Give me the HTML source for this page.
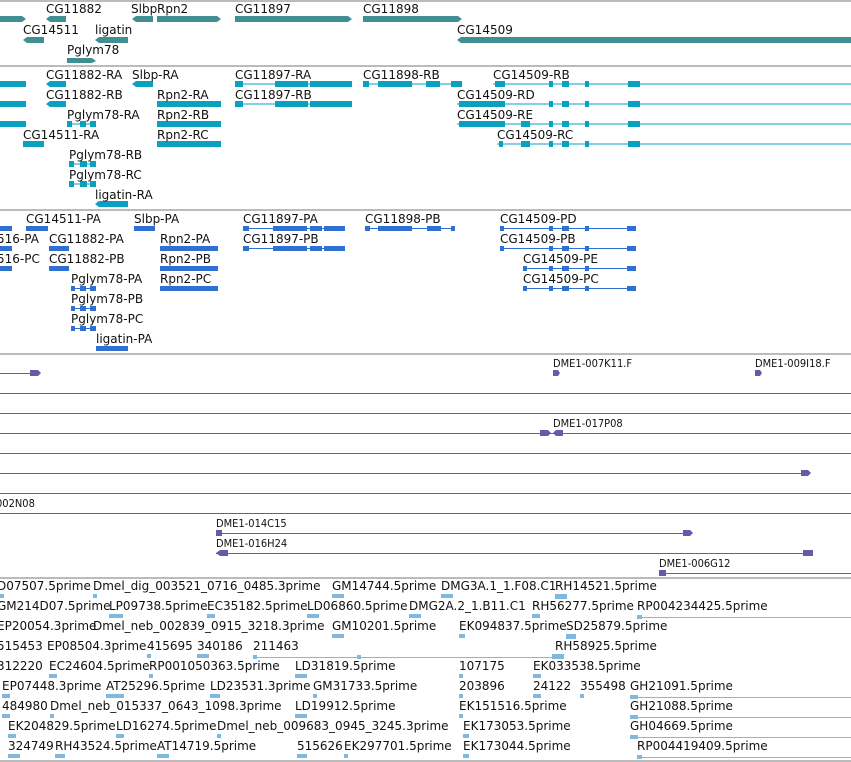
<!DOCTYPE html>
<html><head><meta charset="utf-8"><style>
html,body{margin:0;padding:0;background:#fff;width:851px;height:762px;overflow:hidden}
svg{display:block}
text{font-family:"DejaVu Sans","Liberation Sans",sans-serif;font-size:12px;fill:#111}
.c text{font-family:"DejaVu Sans Condensed","DejaVu Sans",sans-serif;font-size:11px}
</style></head><body>
<svg width="851" height="762" xmlns="http://www.w3.org/2000/svg">
<g stroke="#bbb" stroke-width="2">
<line x1="0" y1="1" x2="851" y2="1"/><line x1="0" y1="66" x2="851" y2="66"/>
<line x1="0" y1="210" x2="851" y2="210"/><line x1="0" y1="354" x2="851" y2="354"/>
<line x1="0" y1="578" x2="851" y2="578"/><line x1="0" y1="761" x2="851" y2="761"/>
</g>
<!-- Track 1 genes -->
<g fill="#418f93">
<polygon points="0,16 22,16 26,19 22,22 0,22"/>
<polygon points="50,16 66,16 66,22 50,22 46,19"/>
<polygon points="136,16 153,16 153,22 136,22 132,19"/>
<polygon points="157,16 217,16 221,19 217,22 157,22"/>
<polygon points="235,16 348,16 352,19 348,22 235,22"/>
<polygon points="363,16 458,16 462,19 458,22 363,22"/>
<polygon points="461,37 851,37 851,43 461,43 457,40"/>
<polygon points="27,37 44,37 44,43 27,43 23,40"/>
<polygon points="99,37 128,37 128,43 99,43 95,40"/>
<polygon points="67,58 92,58 96,61 92,63 67,63"/>
</g>
<text x="46" y="13">CG11882</text><text x="131" y="13">Slbp</text><text x="157" y="13">Rpn2</text>
<text x="235" y="13">CG11897</text><text x="363" y="13">CG11898</text>
<text x="23" y="34">CG14511</text><text x="95" y="34">ligatin</text><text x="457" y="34">CG14509</text>
<text x="67" y="54">Pglym78</text>
<!-- Track 2 transcripts -->
<g fill="#0aa0c0" stroke="none">
<rect x="0" y="83.5" width="26" height="1"/><rect x="0" y="81" width="26" height="6"/>
<rect x="0" y="101" width="26" height="6"/><rect x="0" y="121" width="26" height="6"/>
<polygon points="50,81 66,81 66,87 50,87 46,84"/><polygon points="50,101 66,101 66,107 50,107 46,104"/>
<polygon points="136,81 153,81 153,87 136,87 132,84"/>
<rect x="235" y="83.5" width="117" height="1"/><rect x="235" y="81" width="8" height="6"/><rect x="275" y="81" width="33" height="6"/><rect x="310" y="81" width="12" height="6"/><rect x="322" y="81" width="30" height="6"/>
<rect x="235" y="103.5" width="117" height="1"/><rect x="235" y="101" width="8" height="6"/><rect x="275" y="101" width="33" height="6"/><rect x="310" y="101" width="12" height="6"/><rect x="322" y="101" width="30" height="6"/>
<rect x="363" y="83.5" width="99" height="1"/><rect x="363" y="81" width="6" height="6"/><rect x="378" y="81" width="34" height="6"/><rect x="426" y="81" width="14" height="6"/><rect x="451" y="81" width="11" height="6"/>
<rect x="157" y="101" width="64" height="6"/><rect x="157" y="121" width="64" height="6"/><rect x="157" y="141" width="64" height="6"/>
<rect x="67" y="123.5" width="29" height="1"/><rect x="67" y="121" width="5" height="6"/><rect x="80" y="121" width="6" height="6"/><rect x="90" y="121" width="6" height="6"/>
<rect x="23" y="141" width="21" height="6"/>
<rect x="69" y="163.5" width="27" height="1"/><rect x="69" y="161" width="5" height="6"/><rect x="80" y="161" width="7" height="6"/><rect x="90" y="161" width="6" height="6"/>
<rect x="69" y="183.5" width="27" height="1"/><rect x="69" y="181" width="5" height="6"/><rect x="80" y="181" width="7" height="6"/><rect x="90" y="181" width="6" height="6"/>
<polygon points="99,201 128,201 128,207 99,207 95,204"/>
<rect x="493" y="83.5" width="358" height="1"/><rect x="495" y="81" width="10" height="6"/><rect x="628" y="81" width="12" height="6"/>
<rect x="457" y="103.5" width="394" height="1"/><rect x="459" y="101" width="46" height="6"/><rect x="628" y="101" width="12" height="6"/>
<rect x="457" y="123.5" width="394" height="1"/><rect x="459" y="121" width="46" height="6"/><rect x="521" y="121" width="9" height="6"/><rect x="628" y="121" width="12" height="6"/>
<rect x="497" y="143.5" width="354" height="1"/><rect x="499" y="141" width="4" height="6"/><rect x="521" y="141" width="9" height="6"/><rect x="628" y="141" width="12" height="6"/>
<rect x="549" y="81" width="4" height="6"/><rect x="562" y="81" width="7" height="6"/><rect x="585" y="81" width="4" height="6"/>
<rect x="549" y="101" width="4" height="6"/><rect x="562" y="101" width="7" height="6"/><rect x="585" y="101" width="4" height="6"/>
<rect x="549" y="121" width="4" height="6"/><rect x="562" y="121" width="7" height="6"/><rect x="585" y="121" width="4" height="6"/>
<rect x="549" y="141" width="4" height="6"/><rect x="562" y="141" width="7" height="6"/><rect x="585" y="141" width="4" height="6"/>
</g>
<text x="46" y="79">CG11882-RA</text><text x="132" y="79">Slbp-RA</text><text x="235" y="79">CG11897-RA</text><text x="363" y="79">CG11898-RB</text><text x="493" y="79">CG14509-RB</text>
<text x="46" y="99">CG11882-RB</text><text x="157" y="99">Rpn2-RA</text><text x="235" y="99">CG11897-RB</text><text x="457" y="99">CG14509-RD</text>
<text x="67" y="119">Pglym78-RA</text><text x="157" y="119">Rpn2-RB</text><text x="457" y="119">CG14509-RE</text>
<text x="23" y="139">CG14511-RA</text><text x="157" y="139">Rpn2-RC</text><text x="497" y="139">CG14509-RC</text>
<text x="69" y="159">Pglym78-RB</text><text x="69" y="179">Pglym78-RC</text><text x="95" y="199">ligatin-RA</text>
<!-- Track 3 proteins -->
<g fill="#3070d0">
<rect x="0" y="226" width="12" height="5"/><rect x="26" y="226" width="22" height="5"/><rect x="134" y="226" width="21" height="5"/>
<rect x="243" y="228" width="102" height="1"/><rect x="243" y="226" width="6" height="5"/><rect x="273" y="226" width="34" height="5"/><rect x="310" y="226" width="12" height="5"/><rect x="324" y="226" width="21" height="5"/>
<rect x="365" y="228" width="90" height="1"/><rect x="365" y="226" width="5" height="5"/><rect x="378" y="226" width="34" height="5"/><rect x="427" y="226" width="14" height="5"/><rect x="451" y="226" width="4" height="5"/>
<rect x="0" y="246" width="12" height="5"/><rect x="49" y="246" width="20" height="5"/><rect x="160" y="246" width="58" height="5"/>
<rect x="243" y="248" width="102" height="1"/><rect x="243" y="246" width="6" height="5"/><rect x="273" y="246" width="34" height="5"/><rect x="310" y="246" width="12" height="5"/><rect x="324" y="246" width="21" height="5"/>
<rect x="0" y="266" width="12" height="5"/><rect x="49" y="266" width="20" height="5"/><rect x="160" y="266" width="58" height="5"/>
<rect x="71" y="288" width="25" height="1"/><rect x="71" y="286" width="4" height="5"/><rect x="80" y="286" width="6" height="5"/><rect x="90" y="286" width="6" height="5"/><rect x="160" y="286" width="58" height="5"/>
<rect x="71" y="308" width="25" height="1"/><rect x="71" y="306" width="4" height="5"/><rect x="80" y="306" width="6" height="5"/><rect x="90" y="306" width="6" height="5"/>
<rect x="71" y="328" width="25" height="1"/><rect x="71" y="326" width="4" height="5"/><rect x="80" y="326" width="6" height="5"/><rect x="90" y="326" width="6" height="5"/>
<rect x="96" y="346" width="32" height="5"/>
<rect x="500" y="228" width="136" height="1"/><rect x="500" y="248" width="136" height="1"/><rect x="523" y="268" width="113" height="1"/><rect x="523" y="288" width="113" height="1"/>
<rect x="500" y="226" width="4" height="5"/><rect x="500" y="246" width="4" height="5"/><rect x="523" y="266" width="4" height="5"/><rect x="523" y="286" width="4" height="5"/>
<rect x="549" y="226" width="4" height="5"/><rect x="562" y="226" width="7" height="5"/><rect x="585" y="226" width="4" height="5"/><rect x="627" y="226" width="9" height="5"/>
<rect x="549" y="246" width="4" height="5"/><rect x="562" y="246" width="7" height="5"/><rect x="585" y="246" width="4" height="5"/><rect x="627" y="246" width="9" height="5"/>
<rect x="549" y="266" width="4" height="5"/><rect x="562" y="266" width="7" height="5"/><rect x="585" y="266" width="4" height="5"/><rect x="627" y="266" width="9" height="5"/>
<rect x="549" y="286" width="4" height="5"/><rect x="562" y="286" width="7" height="5"/><rect x="585" y="286" width="4" height="5"/><rect x="627" y="286" width="9" height="5"/>
</g>
<text x="26" y="223">CG14511-PA</text><text x="134" y="223">Slbp-PA</text><text x="243" y="223">CG11897-PA</text><text x="365" y="223">CG11898-PB</text><text x="500" y="223">CG14509-PD</text>
<text x="-3" y="243">516-PA</text><text x="49" y="243">CG11882-PA</text><text x="160" y="243">Rpn2-PA</text><text x="243" y="243">CG11897-PB</text><text x="500" y="243">CG14509-PB</text>
<text x="-3" y="263">516-PC</text><text x="49" y="263">CG11882-PB</text><text x="160" y="263">Rpn2-PB</text><text x="523" y="263">CG14509-PE</text>
<text x="71" y="283">Pglym78-PA</text><text x="160" y="283">Rpn2-PC</text><text x="523" y="283">CG14509-PC</text>
<text x="71" y="303">Pglym78-PB</text><text x="71" y="323">Pglym78-PC</text><text x="96" y="343">ligatin-PA</text>
<!-- Track 4 clones -->
<g fill="#6a58a8">
<rect x="0" y="373" width="34" height="1"/><polygon points="30,370 38,370 41,373 38,376 30,376"/>
<polygon points="553,370 558,370 560,373 558,376 553,376"/><polygon points="755,370 760,370 762,373 760,376 755,376"/>
<rect x="0" y="393" width="851" height="1"/><rect x="0" y="413" width="851" height="1"/>
<rect x="0" y="433" width="851" height="1"/><polygon points="540,430 548,430 551,433 548,436 540,436"/><polygon points="556,430 563,430 563,436 556,436 553,433"/>
<rect x="0" y="453" width="851" height="1"/>
<rect x="0" y="473" width="808" height="1"/><polygon points="801,470 808,470 811,473 808,476 801,476"/>
<rect x="0" y="493" width="851" height="1"/><rect x="0" y="513" width="851" height="1"/>
<rect x="216" y="533" width="474" height="1"/><rect x="216" y="530" width="6" height="6"/><polygon points="683,530 690,530 693,533 690,536 683,536"/>
<rect x="216" y="553" width="597" height="1"/><polygon points="220,550 228,550 228,556 220,556 216,553"/><rect x="803" y="550" width="10" height="6"/>
<rect x="659" y="573" width="192" height="1"/><rect x="659" y="570" width="7" height="6"/>
</g>
<g class="c">
<text x="553" y="367">DME1-007K11.F</text><text x="755" y="367">DME1-009I18.F</text>
<text x="553" y="427">DME1-017P08</text><text x="-4" y="507">002N08</text>
<text x="216" y="527">DME1-014C15</text><text x="216" y="547">DME1-016H24</text><text x="659" y="567">DME1-006G12</text>
</g>
<!-- Track 5 ESTs -->
<g fill="#80b8e0">
<rect x="0" y="594" width="4" height="4"/><rect x="93" y="594" width="4" height="4"/><rect x="332" y="594" width="12" height="4"/><rect x="441" y="594" width="12" height="4"/><rect x="555" y="594" width="12" height="5"/>
<rect x="109" y="614" width="14" height="4"/><rect x="207" y="614" width="8" height="4"/><rect x="307" y="614" width="12" height="4"/><rect x="409" y="614" width="12" height="4"/><rect x="532" y="614" width="8" height="4"/>
<rect x="637" y="617" width="214" height="1"/><rect x="637" y="615" width="5" height="4"/>
<rect x="332" y="634" width="12" height="4"/><rect x="459" y="634" width="6" height="4"/><rect x="566" y="634" width="10" height="5"/>
<rect x="147" y="654" width="4" height="4"/><rect x="197" y="654" width="12" height="4"/><rect x="253" y="657" width="302" height="1"/><rect x="253" y="655" width="4" height="4"/><rect x="357" y="655" width="4" height="4"/><rect x="552" y="654" width="12" height="5"/>
<rect x="49" y="674" width="8" height="4"/><rect x="149" y="674" width="4" height="4"/><rect x="295" y="674" width="12" height="4"/><rect x="459" y="674" width="4" height="4"/><rect x="533" y="674" width="8" height="4"/>
<rect x="2" y="694" width="8" height="4"/><rect x="106" y="694" width="18" height="4"/><rect x="210" y="694" width="10" height="4"/><rect x="313" y="694" width="4" height="4"/><rect x="459" y="694" width="4" height="4"/><rect x="533" y="694" width="8" height="4"/><rect x="580" y="694" width="4" height="4"/>
<rect x="630" y="697" width="221" height="1"/><rect x="630" y="695" width="8" height="4"/>
<rect x="2" y="714" width="8" height="4"/><rect x="50" y="714" width="4" height="4"/><rect x="295" y="714" width="12" height="4"/><rect x="459" y="714" width="4" height="4"/>
<rect x="630" y="717" width="221" height="1"/><rect x="630" y="715" width="8" height="4"/>
<rect x="8" y="734" width="8" height="4"/><rect x="116" y="734" width="8" height="4"/><rect x="217" y="734" width="4" height="4"/><rect x="463" y="734" width="6" height="4"/>
<rect x="630" y="737" width="221" height="1"/><rect x="630" y="735" width="8" height="4"/>
<rect x="8" y="754" width="12" height="4"/><rect x="55" y="754" width="10" height="4"/><rect x="157" y="754" width="12" height="4"/><rect x="297" y="754" width="10" height="4"/><rect x="344" y="754" width="4" height="4"/><rect x="463" y="754" width="6" height="4"/>
<rect x="637" y="757" width="214" height="1"/><rect x="637" y="755" width="5" height="4"/>
</g>
<text x="-3" y="590">D07507.5prime</text><text x="93" y="590">Dmel_dig_003521_0716_0485.3prime</text><text x="332" y="590">GM14744.5prime</text><text x="441" y="590">DMG3A.1_1.F08.C1</text><text x="555" y="590">RH14521.5prime</text>
<text x="-3" y="610">GM214D07.5prime</text><text x="109" y="610">LP09738.5prime</text><text x="207" y="610">EC35182.5prime</text><text x="307" y="610">LD06860.5prime</text><text x="409" y="610">DMG2A.2_1.B11.C1</text><text x="532" y="610">RH56277.5prime</text><text x="637" y="610">RP004234425.5prime</text>
<text x="-3" y="630">EP20054.3prime</text><text x="93" y="630">Dmel_neb_002839_0915_3218.3prime</text><text x="332" y="630">GM10201.5prime</text><text x="459" y="630">EK094837.5prime</text><text x="566" y="630">SD25879.5prime</text>
<text x="-3" y="650">515453</text><text x="47" y="650">EP08504.3prime</text><text x="147" y="650">415695</text><text x="197" y="650">340186</text><text x="253" y="650">211463</text><text x="555" y="650">RH58925.5prime</text>
<text x="-3" y="670">312220</text><text x="49" y="670">EC24604.5prime</text><text x="149" y="670">RP001050363.5prime</text><text x="295" y="670">LD31819.5prime</text><text x="459" y="670">107175</text><text x="533" y="670">EK033538.5prime</text>
<text x="2" y="690">EP07448.3prime</text><text x="106" y="690">AT25296.5prime</text><text x="210" y="690">LD23531.3prime</text><text x="313" y="690">GM31733.5prime</text><text x="459" y="690">203896</text><text x="533" y="690">24122</text><text x="580" y="690">355498</text><text x="630" y="690">GH21091.5prime</text>
<text x="2" y="710">484980</text><text x="50" y="710">Dmel_neb_015337_0643_1098.3prime</text><text x="295" y="710">LD19912.5prime</text><text x="459" y="710">EK151516.5prime</text><text x="630" y="710">GH21088.5prime</text>
<text x="8" y="730">EK204829.5prime</text><text x="116" y="730">LD16274.5prime</text><text x="217" y="730">Dmel_neb_009683_0945_3245.3prime</text><text x="463" y="730">EK173053.5prime</text><text x="630" y="730">GH04669.5prime</text>
<text x="8" y="750">324749</text><text x="55" y="750">RH43524.5prime</text><text x="157" y="750">AT14719.5prime</text><text x="297" y="750">515626</text><text x="344" y="750">EK297701.5prime</text><text x="463" y="750">EK173044.5prime</text><text x="637" y="750">RP004419409.5prime</text>
</svg>
</body></html>
